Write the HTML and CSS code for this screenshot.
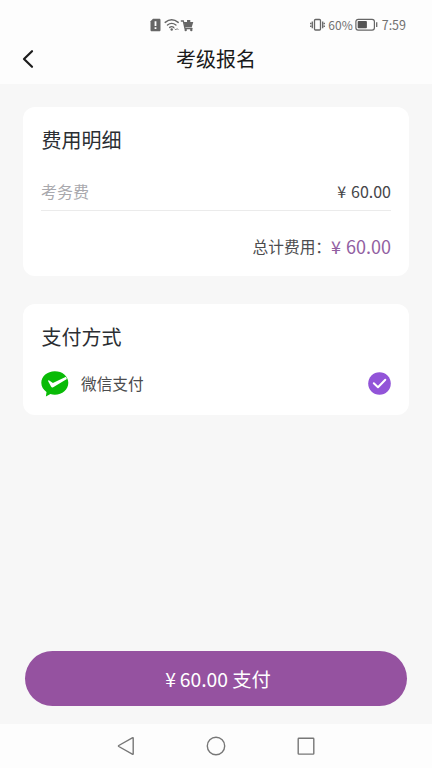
FILE: index.html
```html
<!DOCTYPE html>
<html lang="zh-CN">
<head>
<meta charset="utf-8">
<meta name="viewport" content="width=device-width, initial-scale=1">
<title>考级报名</title>
<link rel="stylesheet" href="styles.css">
</head>
<body>
<div class="status">
  <svg class="status-left" width="46" height="14" viewBox="0 0 46 14">
    <path fill="#666" d="M3 .8h6.2c.8 0 1.3.5 1.3 1.3v9.8c0 .8-.5 1.3-1.3 1.3H1.8c-.8 0-1.3-.5-1.3-1.3V3.3z"/>
    <path stroke="#fff" stroke-width="1.8" d="M5.5 3.3v4.6M5.5 9.2V11"/>
    <g fill="none" stroke="#666" stroke-width="1.4" stroke-linecap="round"><path d="M15.2 4.4q6.5-5.3 13 0M17.5 7q4.2-3.3 8.400 0M19.700 9.400q2-1.500 4 0"/></g>
    <circle cx="21.700" cy="11.500" r="1.200" fill="#666"/>
    <path fill="none" stroke="#777" d="M24.500 10.600l1.300 1.300 1.300-1.300 1.300 1.300"/>
    <path fill="none" stroke="#666" stroke-width="1.300" stroke-linecap="round" d="M31.300 3h2l1.700 7.500h7"/>
    <path fill="#666" d="M33.800 4H37V2h3.300v2h3l-1.600 5.200h-6.800z"/>
    <circle cx="35.700" cy="12" r="1.200" fill="#666"/><circle cx="41.300" cy="12" r="1.200" fill="#666"/>
  </svg>
  <div class="status-right">
    <svg width="15" height="14" viewBox="0 0 15 14" fill="none" stroke="#666" stroke-width="1.3"><rect x="4.500" y="1.500" width="6" height="10.500" rx="1"/><path d="M2.300 3.500v6.800M12.700 3.500v6.800M.7 4.800v1.500M.7 7.500V9M14.300 4.800v1.500M14.300 7.500V9"/></svg>
    <span class="percent">60%</span>
    <svg width="23" height="14" viewBox="0 0 23 14"><rect x=".9" y="1.300" width="18.500" height="10.800" rx="2.300" fill="none" stroke="#666" stroke-width="1.200"/><rect x="2.700" y="3.100" width="9.200" height="7.200" rx=".8" fill="#555"/><path stroke="#666" stroke-width="1.300" d="M21.700 4.300v4.800"/></svg>
    <span class="clock">7:59</span>
  </div>
</div>
<header class="header">
  <svg class="back" width="14" height="20" viewBox="0 0 14 20" fill="none" stroke="#1c1c1c" stroke-width="2.2" stroke-linecap="round" stroke-linejoin="round"><path d="M12 2.200 4 10l8 7.800"/></svg>
  <h1>考级报名</h1>
</header>
<main class="main">
  <section class="card fees">
    <h2>费用明细</h2>
    <div class="row">
      <span class="label">考务费</span>
      <span class="price"><span class="yen">¥</span>60.00</span>
    </div>
    <div class="total">
      <span class="total-label">总计费用：</span>
      <span class="price sum"><span class="yen">¥</span>60.00</span>
    </div>
  </section>
  <section class="card methods">
    <h2>支付方式</h2>
    <div class="method">
      <svg width="28" height="26" viewBox="0 0 28 26"><path fill="#09bb07" d="M13.800.3C6.400.3.3 5.300.3 11.800c0 3.700 2 7 5.200 9.200l-.6 4.500 4.500-2.400c1.400.4 2.900.6 4.400.6 7.600 0 13.500-5.200 13.500-11.900S21.300.3 13.800.3z"/><path fill="#fff" d="M6.900 9.800q.8-.8 1.700-.1l3.300 2.400L25 5.800l.9 2.100-13.700 8.400q-1.400.8-2.200-.7z"/></svg>
      <span class="method-name">微信支付</span>
      <svg width="23" height="23" viewBox="0 0 23 23"><circle cx="11.500" cy="11.500" r="11.300" fill="#9254d8"/><path fill="none" stroke="#fff" stroke-width="2" stroke-linecap="round" stroke-linejoin="round" d="M5.800 11.200l4.200 4 7.300-7.400"/></svg>
    </div>
  </section>
  <button class="pay"><span class="yen">¥</span>60.00 支付</button>
</main>
<nav class="nav">
  <svg width="20" height="20" viewBox="0 0 20 20"><path d="M17.200 2.300v15.400q0 .9-.9.400L2.800 10.500q-.8-.5 0-1L16.300 1.900q.9-.5.900.4z"/></svg>
  <svg width="20" height="20" viewBox="0 0 20 20"><circle cx="10" cy="10" r="8.700"/></svg>
  <svg width="20" height="20" viewBox="0 0 20 20"><rect x="2.200" y="2.300" width="15.600" height="15.800" rx=".7"/></svg>
</nav>
</body>
</html>
```
FILE: styles.css
```css
* { box-sizing: border-box; }

body {
  margin: 0;
  height: 768px;
  display: flex;
  flex-direction: column;
  overflow: hidden;
  background: #fdfdfd;
  color: #2b2e32;
  font-family: "Noto Sans CJK SC", sans-serif;
}

svg { display: block; flex: none; }
h1, h2 { margin: 0; font-weight: 400; font-size: 20px; line-height: 30px; }
h2 { padding-left: .5px; }

.status {
  height: 36px;
  padding: 14px 26px 0 150px;
  display: flex;
  align-items: center;
  justify-content: space-between;
  color: #707070;
}
.status-left { margin-top: -1px; }
.status-right { display: flex; align-items: center; font-size: 12.5px; line-height: 20px; }
.percent { margin: 0 2px 0 3px; font-size: 12px; }
.clock { margin-left: 4px; }

.header {
  height: 48px;
  padding: 0 20px;
  display: grid;
  grid-template-columns: 14px 1fr 14px;
  align-items: center;
  text-align: center;
  color: #1a1a1a;
}
.header .back { margin-top: -3px; }
.header h1 { margin-top: -3px; }

.main {
  flex: 1;
  padding: 23px 23px 18px;
  display: flex;
  flex-direction: column;
  background: #f7f7f7;
}

.card { padding: 18px; border-radius: 12px; background: #fff; }
.fees { height: 169px; }
.methods { height: 111px; margin-top: 28px; }

.row {
  height: 56px;
  padding-top: 16px;
  border-bottom: 1px solid #ebebeb;
  display: flex;
  align-items: center;
  justify-content: space-between;
  font-size: 16px;
}
.label { color: #a8a8ad; }
.price { color: #454548; }
.yen { margin-right: 5px; }
.total {
  height: 71px;
  display: flex;
  align-items: center;
  justify-content: flex-end;
  font-size: 15.7px;
  color: #4c4c4e;
}
.sum { margin-top: -2px; font-size: 18px; color: #9260a2; }

.method { height: 63px; display: flex; align-items: center; }
.method-name {
  flex: 1;
  margin-left: 12px;
  font-size: 15.7px;
  color: #4c4c4e;
}

.pay {
  width: 382px;
  height: 55px;
  margin: auto 0 0 2px;
  padding: 1px 0 0 4px;
  border: 0;
  border-radius: 28px;
  background: #9552a0;
  color: #fff;
  font: 400 19.3px/55px "Noto Sans CJK SC", sans-serif;
}
.pay .yen { margin-right: 4px; }

.nav {
  height: 44px;
  padding: 0 116px;
  display: flex;
  align-items: center;
  justify-content: space-between;
  fill: none;
  stroke: #777;
  stroke-width: 1.4;
}
```
